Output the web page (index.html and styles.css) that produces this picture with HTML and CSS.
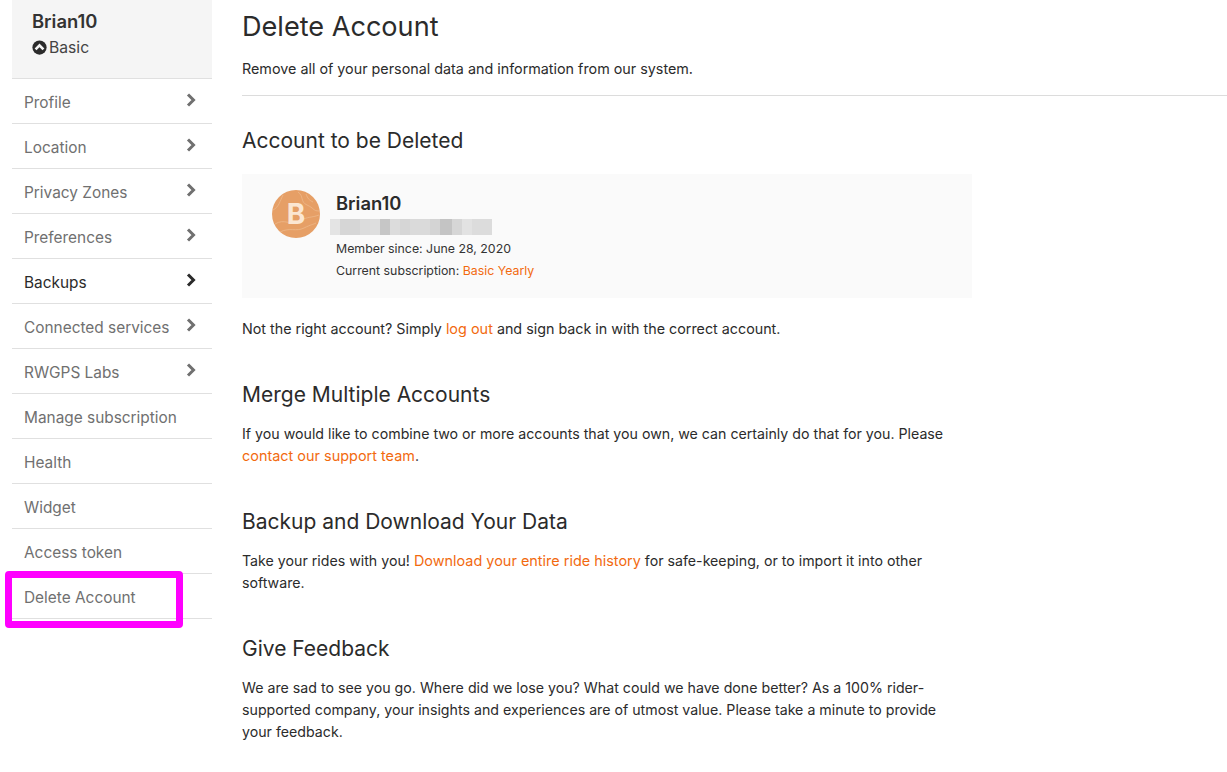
FILE: index.html
```html
<!DOCTYPE html>
<html lang="en">
<head>
<meta charset="utf-8">
<title>Delete Account</title>
<link rel="stylesheet" href="styles.css">
</head>
<body>
<div class="page">
  <aside class="sidebar">
    <div class="user">
      <div class="user-name">Brian10</div>
      <div class="user-plan">
        <svg class="plan-icon" viewBox="0 0 16 16"><circle cx="8" cy="8" r="7.6" fill="#2b2b2b"/><path d="M3.8 10 8 5.8l4.2 4.2" fill="none" stroke="#f5f5f5" stroke-width="2.8"/></svg>
        <span>Basic</span>
      </div>
    </div>
    <nav class="menu">
      <a class="item">Profile<svg class="chev" viewBox="0 0 10 14"><path d="M2 1.5 7.5 7 2 12.5" /></svg></a>
      <a class="item">Location<svg class="chev" viewBox="0 0 10 14"><path d="M2 1.5 7.5 7 2 12.5" /></svg></a>
      <a class="item">Privacy Zones<svg class="chev" viewBox="0 0 10 14"><path d="M2 1.5 7.5 7 2 12.5" /></svg></a>
      <a class="item">Preferences<svg class="chev" viewBox="0 0 10 14"><path d="M2 1.5 7.5 7 2 12.5" /></svg></a>
      <a class="item item-active">Backups<svg class="chev" viewBox="0 0 10 14"><path d="M2 1.5 7.5 7 2 12.5" /></svg></a>
      <a class="item">Connected services<svg class="chev" viewBox="0 0 10 14"><path d="M2 1.5 7.5 7 2 12.5" /></svg></a>
      <a class="item">RWGPS Labs<svg class="chev" viewBox="0 0 10 14"><path d="M2 1.5 7.5 7 2 12.5" /></svg></a>
      <a class="item">Manage subscription</a>
      <a class="item">Health</a>
      <a class="item">Widget</a>
      <a class="item">Access token</a>
      <a class="item highlight-host">Delete Account<span class="highlight"></span></a>
    </nav>
  </aside>
  <main class="content">
    <header class="head">
      <h1>Delete Account</h1>
      <p>Remove all of your personal data and information from our system.</p>
    </header>
    <section class="narrow">
      <h2 class="first">Account to be Deleted</h2>
      <div class="card">
        <svg class="avatar" viewBox="0 0 48 48">
          <circle cx="24" cy="24" r="24" fill="#e69f66"/>
          <g fill="none" stroke="#eeb98a" stroke-width=".8">
            <path d="M3 34c10-6 14 2 24-3s12-3 20-6"/>
            <path d="M8 42c10-5 16 0 24-4s8-3 12-5"/>
            <path d="M26 2c6 4 2 10 9 13s6 6 12 6"/>
            <path d="M34 4c2 5 3 6 7 8"/>
            <path d="M1 20c6-3 7-9 10-15"/>
          </g>
          <text x="24" y="34" text-anchor="middle" class="avatar-text">B</text>
        </svg>
        <div class="card-info">
          <div class="card-name">Brian10</div>
          <div class="blurred"></div>
          <div class="card-line">Member since: June 28, 2020</div>
          <div class="card-line">Current subscription: <a class="link">Basic Yearly</a></div>
        </div>
      </div>
      <p class="wide">Not the right account? Simply <a class="link">log out</a> and sign back in with the correct account.</p>
      <h2>Merge Multiple Accounts</h2>
      <p>If you would like to combine two or more accounts that you own, we can certainly do that for you. Please <a class="link">contact our support team</a>.</p>
      <h2>Backup and Download Your Data</h2>
      <p>Take your rides with you! <a class="link">Download your entire ride history</a> for safe-keeping, or to import it into other software.</p>
      <h2>Give Feedback</h2>
      <p>We are sad to see you go. Where did we lose you? What could we have done better? As a 100% rider-supported company, your insights and experiences are of utmost value. Please take a minute to provide your feedback.</p>
    </section>
  </main>
</div>
</body>
</html>
```
FILE: styles.css
```css
* { box-sizing: border-box; }
html, body { margin: 0; height: 100%; overflow: hidden; }
body {
  background: #fff;
  color: #2b2b2b;
  font-family: Inter, "Liberation Sans", sans-serif;
  font-size: 14.2px;
  line-height: 22px;
}
.page {
  display: flex;
  padding-left: 12px;
  gap: 30px;
}
.sidebar { width: 200px; flex: none; }
.user {
  height: 78px;
  background: #f5f5f5;
  padding: 9px 20px 0;
}
.user-name { font-size: 18.4px; font-weight: 600; line-height: 24px; color: #333; }
.user-plan {
  display: flex;
  align-items: center;
  gap: 2px;
  margin-top: 3px;
  font-size: 15.7px;
  line-height: 24px;
  color: #444;
}
.plan-icon { width: 15px; height: 15px; margin-top: -1px; }
.menu { display: flex; flex-direction: column; }
.item {
  position: relative;
  display: flex;
  justify-content: space-between;
  align-items: center;
  height: 45px;
  padding: 3px 16px 0 12px;
  border-top: 1px solid #e0e0e0;
  font-size: 15.4px;
  color: #707070;
}
.item:last-child { border-bottom: 1px solid #e0e0e0; height: 46px; }
.item-active { color: #2b2b2b; }
.chev {
  width: 10px;
  height: 14px;
  margin-top: -5px;
  fill: none;
  stroke: #707070;
  stroke-width: 3;
}
.item-active .chev { stroke: #2b2b2b; }
.highlight {
  position: absolute;
  left: -7px;
  top: -3px;
  width: 178px;
  height: 57px;
  border: 7px solid #ff00ff;
  border-radius: 4px;
}
.content { flex: 1; min-width: 0; }
.head {
  border-bottom: 1px solid #dcdcdc;
  height: 96px;
  padding-top: 9px;
}
h1 {
  margin: 0;
  font-size: 27.1px;
  font-weight: 400;
  line-height: 36px;
  color: #2b2b2b;
}
.head p { margin: 13px 0 0; font-size: 14.33px; }
.narrow { width: 730px; }
h2 {
  margin: 41px 0 14px;
  font-size: 21px;
  font-weight: 400;
  line-height: 28px;
  color: #2b2b2b;
}
h2.first { margin-top: 31px; margin-bottom: 19px; }
p { margin: 0; max-width: 720px; }
.wide { font-size: 14.3px; }
.link { color: #f26a0f; }
p .link { font-size: 14.45px; }
.card {
  display: flex;
  height: 124px;
  margin-bottom: 20px;
  padding: 16px 30px 0;
  background: #fafafa;
  gap: 16px;
}
.avatar { width: 48px; height: 48px; flex: none; }
.avatar-text { font-family: Inter, sans-serif; font-size: 28px; font-weight: 700; fill: #fbe6d2; }
.card-name { font-size: 18.4px; font-weight: 600; line-height: 26px; margin-bottom: 3px; color: #2b2b2b; }
.blurred {
  width: 162px;
  height: 16px;
  margin: 0 0 3px -6px;
  background: linear-gradient(90deg,
    #e4e4e4 0 10px, #d6d6d6 10px 30px, #dcdcdc 30px 40px, #dedede 40px 50px,
    #c6c6c6 50px 60px, #dcdcdc 60px 70px, #d6d6d6 70px 80px, #dadada 80px 100px,
    #d4d4d4 100px 110px, #c4c4c4 110px 122px, #d6d6d6 122px 132px, #e2e2e2 132px 142px,
    #dcdcdc 142px 162px);
}
.card-line { font-size: 12.35px; line-height: 22px; color: #333; }
```
